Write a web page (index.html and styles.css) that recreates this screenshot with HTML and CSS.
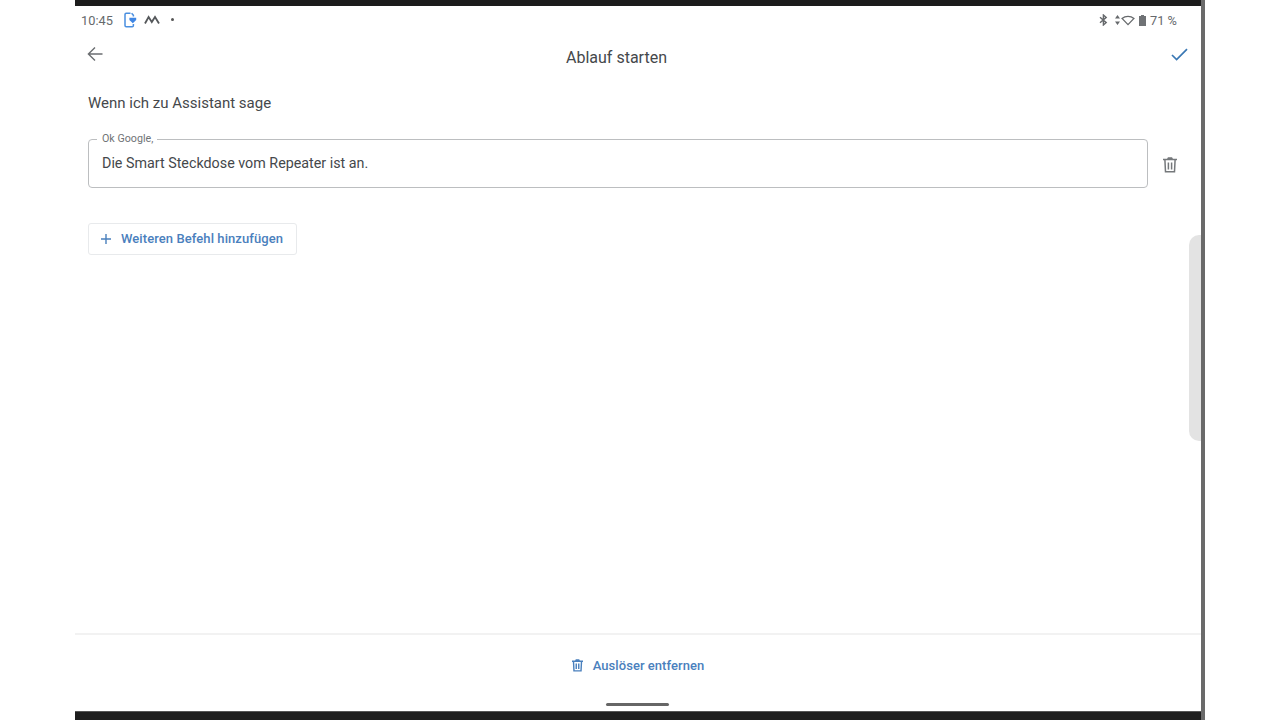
FILE: index.html
```html
<!DOCTYPE html>
<html lang="de">
<head>
<meta charset="utf-8">
<title>Ablauf starten</title>
<link rel="stylesheet" href="styles.css">
</head>
<body>
<div class="device">
  <div class="bezel-top"></div>
  <div class="status">
    <div class="status-left">
      <span class="time">10:45</span>
      <svg class="ic-phone" width="14" height="16" viewBox="0 0 14 16"><path d="M7.5 1.2H3.2a1.2 1.2 0 0 0-1.2 1.2v11.2a1.2 1.2 0 0 0 1.2 1.2h6a1.2 1.2 0 0 0 1.2-1.2v-1.6M10.4 4.6V3.2L8.6 1.2" fill="none" stroke="#4a8fe0" stroke-width="1.5"/><path d="M9.8 11.2 6.4 8V5.8h6.8V8z" fill="#3f86e4"/></svg>
      <svg class="ic-m" width="16" height="10" viewBox="0 0 16 10"><path d="M1 8.5 4.6 2l3.2 5L11 2l4 6.5" fill="none" stroke="#55585b" stroke-width="1.8"/></svg>
      <span class="dot"></span>
    </div>
    <div class="status-right">
      <svg width="9" height="12" viewBox="0 0 9 12"><path d="M1 3.2 7.2 8.6 4.4 11V1l2.8 2.4L1 8.8" fill="none" stroke="#66696c" stroke-width="1.4"/></svg>
      <svg class="ic-arrows" width="5" height="10" viewBox="0 0 5 10"><path d="M2.5 0 5 3.6H0zM2.5 10 0 6.4h5z" fill="#66696c"/></svg>
      <svg class="ic-wifi" width="14" height="11" viewBox="0 0 14 11"><path d="M7 9.6 1 3.4C4.4.6 9.6.6 13 3.4z" fill="none" stroke="#66696c" stroke-width="1.3"/></svg>
      <svg class="ic-batt" width="7" height="11" viewBox="0 0 7 11"><path d="M2 0h3v1h2v10H0V1h2z" fill="#6f7275"/></svg>
      <span class="pct">71 %</span>
    </div>
  </div>
  <header class="head">
    <svg class="ic-back" width="16" height="16" viewBox="0 0 16 16"><path d="M15.5 8H1.6M8 1.4 1.4 8 8 14.6" fill="none" stroke="#6b6e71" stroke-width="1.4"/></svg>
    <h1 class="title">Ablauf starten</h1>
    <svg class="ic-check" width="17" height="13" viewBox="0 0 17 13"><path d="M1 7l4.6 4.6L16 1.2" fill="none" stroke="#3a78b4" stroke-width="1.7"/></svg>
  </header>
  <main class="content">
    <p class="heading">Wenn ich zu Assistant sage</p>
    <div class="row">
      <div class="field">
        <span class="legend">Ok Google,</span>
        <span class="value">Die Smart Steckdose vom Repeater ist an.</span>
      </div>
      <svg class="ic-trash" width="14" height="16" viewBox="0 0 14 16"><path d="M0 2.6h14M4.6 2.4 5.4.9h3.2l.8 1.5M1.9 2.8l.6 12h9l.6-12M5.4 5.4v7M8.6 5.4v7" fill="none" stroke="#75787b" stroke-width="1.5"/></svg>
    </div>
    <button class="add">
      <svg width="10" height="10" viewBox="0 0 10 10"><path d="M5 0v10M0 5h10" stroke="#4a80bd" stroke-width="1.4"/></svg>
      <span>Weiteren Befehl hinzufügen</span>
    </button>
    <div class="scroll-thumb"></div>
  </main>
  <footer class="foot">
    <button class="remove">
      <svg width="11" height="13" viewBox="0 0 14 16"><path d="M0 2.6h14M4.6 2.4 5.4.9h3.2l.8 1.5M1.9 2.8l.6 12h9l.6-12M5.4 5.4v7M8.6 5.4v7" fill="none" stroke="#4a80bd" stroke-width="1.8"/></svg>
      <span>Auslöser entfernen</span>
    </button>
    <div class="home-pill"></div>
  </footer>
  <div class="bezel-bottom"></div>
</div>
</body>
</html>
```
FILE: styles.css
```css
* { box-sizing: border-box; }
html, body { margin: 0; padding: 0; background: #fff; }
body { font-family: Roboto, "Liberation Sans", sans-serif; overflow: hidden; }
.device {
  margin-left: 75px;
  width: 1130px;
  height: 720px;
  border-right: 4px solid #6a6a6a;
  display: flex;
  flex-direction: column;
  background: #fff;
}
.bezel-top { height: 6px; background: #1c1c1c; flex: none; }
.bezel-bottom { height: 9px; background: #1e1e1e; border-top: 1px solid #555; flex: none; }
.status {
  height: 28px;
  flex: none;
  display: flex;
  align-items: center;
  justify-content: space-between;
  padding: 0 24px 0 6px;
  color: #66696c;
  font-size: 12.8px;
}
.status-left, .status-right { display: flex; align-items: center; }
.time { width: 42px; }
.ic-m { margin-left: 7px; }
.dot { width: 3px; height: 3px; border-radius: 50%; background: #555; margin-left: 11px; margin-top: -2px; }
.ic-arrows { margin-left: 7px; }
.ic-wifi { margin-left: 1px; }
.ic-batt { margin-left: 4px; }
.pct { margin-left: 4px; }
.head {
  height: 46px;
  flex: none;
  display: flex;
  align-items: center;
  justify-content: space-between;
  padding: 0 13px 0 12px;
  position: relative;
}
.ic-back { margin-top: -6px; }
.ic-check { margin-top: -6px; }
.title {
  margin: 0;
  font-size: 16px;
  font-weight: 400;
  color: #45484b;
  flex: 1;
  text-align: center;
  padding-right: 41px;
}
.content { flex: 1; padding: 0 0 0 13px; position: relative; }
.heading { margin: 13px 0 0; font-size: 15px; line-height: 20px; color: #45484b; height: 20px; }
.row { display: flex; align-items: center; margin-top: 26px; }
.field {
  width: 1060px;
  height: 49px;
  border: 1px solid #bcbec0;
  border-radius: 4px;
  padding: 0 13px 1px;
  display: flex;
  align-items: center;
  position: relative;
}
.legend {
  position: absolute;
  top: -7px;
  left: 8px;
  padding: 0 4px 0 5px;
  background: #fff;
  font-size: 10.7px;
  line-height: 12px;
  color: #707376;
}
.value { font-size: 14.3px; color: #45484b; }
.ic-trash { margin-left: 15px; margin-top: 3px; }
.add {
  margin-top: 35px;
  width: 209px;
  height: 32px;
  border: 1px solid #e8eaec;
  border-radius: 3px;
  background: #fff;
  padding: 0 0 1px 12px;
  display: flex;
  align-items: center;
  gap: 10px;
  font: 500 13px Roboto, sans-serif;
  letter-spacing: .08px;
  color: #4a80bd;
}
.scroll-thumb {
  position: absolute;
  right: 0;
  top: 155px;
  width: 12px;
  height: 206px;
  background: #e3e3e3;
  border-radius: 10px 0 0 10px;
}
.foot {
  height: 78px;
  flex: none;
  border-top: 2px solid #f2f2f2;
  display: flex;
  flex-direction: column;
  align-items: center;
  position: relative;
}
.remove {
  margin-top: 23px;
  border: 0;
  background: none;
  padding: 0;
  display: flex;
  align-items: center;
  gap: 10px;
  font: 500 13px Roboto, sans-serif;
  letter-spacing: .05px;
  color: #4a80bd;
}
.home-pill {
  position: absolute;
  bottom: 5px;
  left: 531px;
  width: 63px;
  height: 3px;
  border-radius: 2px;
  background: #666;
}
```
